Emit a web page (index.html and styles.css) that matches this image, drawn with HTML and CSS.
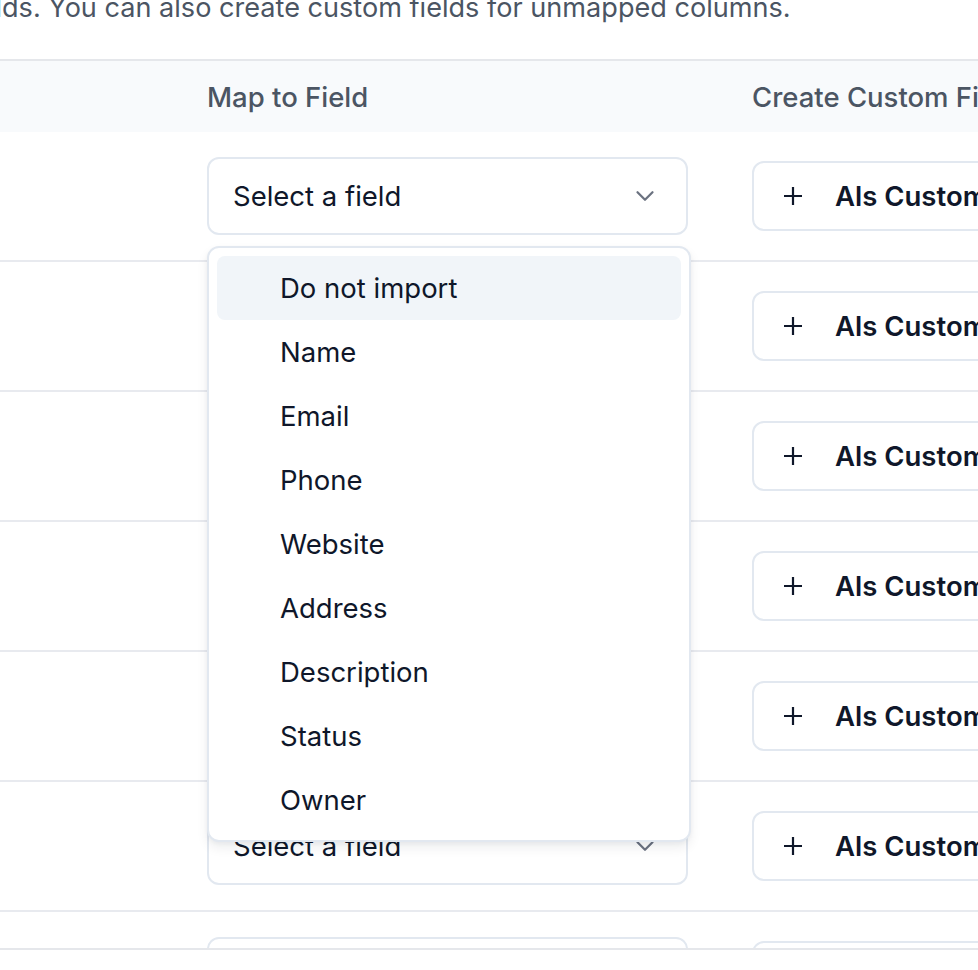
FILE: index.html
```html
<!DOCTYPE html>
<html>
<head>
<meta charset="utf-8">
<link rel="stylesheet" href="styles.css">
</head>
<body>
<div class="viewport">
  <div class="page">
    <p class="intro"><span class="clip">Map the columns of your file to existing fiel</span><span>ds. You can also create custom fields for unmapped columns.</span></p>
    <div class="table">
      <div class="row head">
        <div class="cell">CSV Column</div>
        <div class="cell">Map to Field</div>
        <div class="cell">Create Custom Field</div>
      </div>
      <div class="row">
        <div class="cell"></div>
        <div class="cell">
          <div class="select"><span>Select a field</span><svg class="chev" viewBox="0 0 20 20"><path d="M5 7.5l5 5 5-5" fill="none" stroke="currentColor" stroke-width="1.5" stroke-linecap="round" stroke-linejoin="round"/></svg></div>
          <div class="menu">
            <div class="item active">Do not import</div>
            <div class="item">Name</div>
            <div class="item">Email</div>
            <div class="item">Phone</div>
            <div class="item">Website</div>
            <div class="item">Address</div>
            <div class="item">Description</div>
            <div class="item">Status</div>
            <div class="item">Owner</div>
          </div>
        </div>
        <div class="cell"><div class="btn"><svg class="plus" viewBox="0 0 20 20"><path d="M10 1v18M1 10h18" fill="none" stroke="currentColor" stroke-width="2.2"/></svg><span>Als Custom Field</span></div></div>
      </div>
      <div class="row">
        <div class="cell"></div>
        <div class="cell"><div class="select"><span>Select a field</span><svg class="chev" viewBox="0 0 20 20"><path d="M5 7.5l5 5 5-5" fill="none" stroke="currentColor" stroke-width="1.5" stroke-linecap="round" stroke-linejoin="round"/></svg></div></div>
        <div class="cell"><div class="btn"><svg class="plus" viewBox="0 0 20 20"><path d="M10 1v18M1 10h18" fill="none" stroke="currentColor" stroke-width="2.2"/></svg><span>Als Custom Field</span></div></div>
      </div>
      <div class="row">
        <div class="cell"></div>
        <div class="cell"><div class="select"><span>Select a field</span><svg class="chev" viewBox="0 0 20 20"><path d="M5 7.5l5 5 5-5" fill="none" stroke="currentColor" stroke-width="1.5" stroke-linecap="round" stroke-linejoin="round"/></svg></div></div>
        <div class="cell"><div class="btn"><svg class="plus" viewBox="0 0 20 20"><path d="M10 1v18M1 10h18" fill="none" stroke="currentColor" stroke-width="2.2"/></svg><span>Als Custom Field</span></div></div>
      </div>
      <div class="row">
        <div class="cell"></div>
        <div class="cell"><div class="select"><span>Select a field</span><svg class="chev" viewBox="0 0 20 20"><path d="M5 7.5l5 5 5-5" fill="none" stroke="currentColor" stroke-width="1.5" stroke-linecap="round" stroke-linejoin="round"/></svg></div></div>
        <div class="cell"><div class="btn"><svg class="plus" viewBox="0 0 20 20"><path d="M10 1v18M1 10h18" fill="none" stroke="currentColor" stroke-width="2.2"/></svg><span>Als Custom Field</span></div></div>
      </div>
      <div class="row">
        <div class="cell"></div>
        <div class="cell"><div class="select"><span>Select a field</span><svg class="chev" viewBox="0 0 20 20"><path d="M5 7.5l5 5 5-5" fill="none" stroke="currentColor" stroke-width="1.5" stroke-linecap="round" stroke-linejoin="round"/></svg></div></div>
        <div class="cell"><div class="btn"><svg class="plus" viewBox="0 0 20 20"><path d="M10 1v18M1 10h18" fill="none" stroke="currentColor" stroke-width="2.2"/></svg><span>Als Custom Field</span></div></div>
      </div>
      <div class="row">
        <div class="cell"></div>
        <div class="cell"><div class="select"><span>Select a field</span><svg class="chev" viewBox="0 0 20 20"><path d="M5 7.5l5 5 5-5" fill="none" stroke="currentColor" stroke-width="1.5" stroke-linecap="round" stroke-linejoin="round"/></svg></div></div>
        <div class="cell"><div class="btn"><svg class="plus" viewBox="0 0 20 20"><path d="M10 1v18M1 10h18" fill="none" stroke="currentColor" stroke-width="2.2"/></svg><span>Als Custom Field</span></div></div>
      </div>
      <div class="row">
        <div class="cell"></div>
        <div class="cell"><div class="select"><span>Select a field</span><svg class="chev" viewBox="0 0 20 20"><path d="M5 7.5l5 5 5-5" fill="none" stroke="currentColor" stroke-width="1.5" stroke-linecap="round" stroke-linejoin="round"/></svg></div></div>
        <div class="cell"><div class="btn"><svg class="plus" viewBox="0 0 20 20"><path d="M10 1v18M1 10h18" fill="none" stroke="currentColor" stroke-width="2.2"/></svg><span>Als Custom Field</span></div></div>
      </div>
    </div>
  </div>
</div>
</body>
</html>
```
FILE: styles.css
```css
html, body {
  margin: 0;
  padding: 0;
  background: #fff;
  overflow: hidden;
}
body {
  font-family: Inter, "Noto Sans", sans-serif;
  color: #0f172a;
  width: 978px;
  height: 970px;
}
.viewport {
  width: 978px;
  height: 948px;
  overflow: hidden;
  border-bottom: 2px solid #e5e7eb;
}
.page {
  margin-left: -720px;
  margin-top: -13px;
  width: 1900px;
}
.intro {
  margin: 0 0 30px 0;
  font-size: 27.1px;
  line-height: 42px;
  color: #4b5563;
  white-space: nowrap;
}
.clip {
  display: inline-block;
  width: 722px;
  text-align: right;
  overflow: hidden;
  vertical-align: top;
}
.table {
  border-top: 2px solid #e5e7eb;
}
.row {
  display: grid;
  grid-template-columns: 895px 545px 460px;
  height: 130px;
  align-items: center;
  border-bottom: 2px solid #e8eaef;
  box-sizing: border-box;
}
.row.head {
  height: 71px;
  background: #f8fafc;
  border-bottom: none;
  font-size: 27.5px;
  font-weight: 500;
  color: #4b5563;
}
.cell {
  padding: 0 32px;
  position: relative;
  white-space: nowrap;
}
.select {
  height: 78px;
  width: 481px;
  box-sizing: border-box;
  border: 2px solid #e2e8f0;
  border-radius: 12px;
  display: flex;
  align-items: center;
  justify-content: space-between;
  padding: 0 26px 0 24px;
  font-size: 27.5px;
  color: #0f172a;
  background: #fff;
}
.chev {
  width: 30px;
  height: 30px;
  color: #6b7280;
}
.btn {
  height: 70px;
  width: 400px;
  box-sizing: border-box;
  border: 2px solid #e2e8f0;
  border-radius: 12px;
  display: flex;
  align-items: center;
  padding-left: 29px;
  gap: 32px;
  font-size: 27.5px;
  font-weight: 600;
  color: #0f172a;
  background: #fff;
}
.plus {
  width: 20px;
  height: 20px;
  color: #0f172a;
}
.menu {
  position: absolute;
  left: 32px;
  top: 89px;
  width: 484px;
  box-sizing: border-box;
  background: #fff;
  border: 2px solid #e2e8f0;
  border-radius: 12px;
  box-shadow: 0 6px 12px rgba(15, 23, 42, 0.07), 0 2px 4px rgba(15, 23, 42, 0.04);
  padding: 8px;
  z-index: 10;
}
.item {
  height: 64px;
  display: flex;
  align-items: center;
  padding-left: 63px;
  font-size: 27.5px;
  color: #0f172a;
  border-radius: 8px;
}
.item.active {
  background: #f1f5f9;
}
```
